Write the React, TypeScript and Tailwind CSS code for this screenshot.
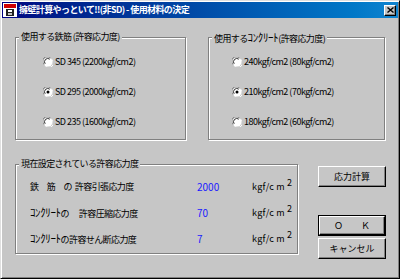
import React from 'react';

const FONT = "'Noto Sans CJK JP', 'Liberation Sans', sans-serif";

// half-width katakana renders small in Noto, so bump it a little
function Hk({ children }: { children: React.ReactNode }) {
  return <span className="text-[11px] tracking-[-0.4px]">{children}</span>;
}

function Radio({ checked }: { checked?: boolean }) {
  return (
    <svg width="10" height="10" viewBox="0 0 12 12" className="shrink-0">
      <circle cx="6" cy="6" r="5.5" fill="#ffffff" />
      <path d="M1.2 9 A5.5 5.5 0 0 1 9 1.2" fill="none" stroke="#808080" strokeWidth="1.2" />
      <path d="M2.6 8.2 A4 4 0 0 1 8.2 2.6" fill="none" stroke="#000000" strokeWidth="1" />
      <path d="M3 11 A5.5 5.5 0 0 0 11 3" fill="none" stroke="#ffffff" strokeWidth="1.2" />
      {checked && <circle cx="6" cy="6" r="1.8" fill="#000000" />}
    </svg>
  );
}

function GroupBox({
  label,
  className,
  children,
}: {
  label: React.ReactNode;
  className: string;
  children: React.ReactNode;
}) {
  return (
    <div
      className={`relative border border-[#808080] shadow-[inset_1px_1px_0_#ffffff,1px_1px_0_#ffffff] ${className}`}
    >
      {/* group caption sits over the top border */}
      <span className="absolute -top-[7px] left-[3px] whitespace-pre bg-[#c6c6c6] px-[2px] text-[9px] leading-[12px] tracking-[-0.6px] text-black">
        {label}
      </span>
      {children}
    </div>
  );
}

function RadioRow({ label, checked }: { label: string; checked?: boolean }) {
  return (
    <div className="flex h-[10px] items-center gap-[2px]">
      <Radio checked={checked} />
      <span className="text-[9px] leading-[10px] tracking-[-0.5px] text-black">{label}</span>
    </div>
  );
}

function WinButton({ children, primary }: { children: React.ReactNode; primary?: boolean }) {
  if (primary) {
    return (
      <div className="border border-black">
        <div className="flex h-[19px] items-center justify-center whitespace-pre border border-t-white border-l-white border-r-black border-b-black shadow-[inset_-1px_-1px_0_#808080] text-[9px] text-black">
          {children}
        </div>
      </div>
    );
  }
  return (
    <div className="flex h-[21px] items-center justify-center border border-t-white border-l-white border-r-black border-b-black shadow-[inset_-1px_-1px_0_#808080] text-[9px] text-black">
      {children}
    </div>
  );
}

function StressRow({ label, value }: { label: React.ReactNode; value: string }) {
  return (
    <div className="flex h-[10px] items-center text-[9px] leading-[10px]">
      <span className="w-[167px] whitespace-pre tracking-[-0.6px] text-black">{label}</span>
      <span className="w-[55px] text-[10px] text-[#1a1aff]">{value}</span>
      <span className="text-black tracking-[0.3px]">
        kgf/c m<sup className="ml-[2px] text-[9px]">2</sup>
      </span>
    </div>
  );
}

export default function App() {
  return (
    <div
      className="flex h-[279px] w-[400px] flex-col border border-t-[#dfdfdf] border-l-[#dfdfdf] border-r-black border-b-black bg-[#c6c6c6] p-[1px] shadow-[inset_1px_1px_0_#ffffff,inset_-1px_-1px_0_#808080]"
      style={{ fontFamily: FONT }}
    >
      {/* Title bar */}
      <div className="flex h-[16px] items-center bg-gradient-to-r from-[#000080] to-[#1084d0] pl-[1px] pr-[2px]">
        <svg width="14" height="14" viewBox="0 0 14 14" className="shrink-0">
          <rect x="0" y="0" width="14" height="14" fill="#ffffff" />
          <rect x="1" y="1" width="12" height="4" fill="#d00000" />
          <rect x="3" y="6" width="8" height="7" fill="#202020" />
          <rect x="5" y="7" width="4" height="2" fill="#ffffff" />
          <rect x="5" y="10" width="4" height="2" fill="#c0c0c0" />
        </svg>
        <span className="ml-[2px] text-[9px] font-bold leading-[14px] tracking-[-0.6px] text-white">
          擁壁計算やっといて!!(非SD) - 使用材料の決定
        </span>
        <div className="ml-auto flex h-[11px] w-[12px] items-center justify-center border border-t-white border-l-white border-r-black border-b-black bg-[#c6c6c6] shadow-[inset_-1px_-1px_0_#808080]">
          <svg width="7" height="6" viewBox="0 0 7 6">
            <path d="M0.5 0.5 L6.5 5.5 M6.5 0.5 L0.5 5.5" stroke="#000" strokeWidth="1.4" />
          </svg>
        </div>
      </div>

      {/* Material selection */}
      <div className="ml-[13px] mt-[19px] flex gap-[22px]">
        <GroupBox label="使用する鉄筋 (許容応力度)" className="h-[103px] w-[171px]">
          <div className="flex flex-col gap-[20px] pl-[27px] pt-[19px]">
            <RadioRow label="SD 345 (2200kgf/cm2)" />
            <RadioRow label="SD 295 (2000kgf/cm2)" checked />
            <RadioRow label="SD 235 (1600kgf/cm2)" />
          </div>
        </GroupBox>
        <GroupBox
          label={
            <>
              使用する<Hk>ｺﾝｸﾘｰﾄ</Hk>(許容応力度)
            </>
          }
          className="h-[103px] w-[177px]"
        >
          <div className="flex flex-col gap-[20px] pl-[23px] pt-[19px]">
            <RadioRow label="240kgf/cm2 (80kgf/cm2)" />
            <RadioRow label="210kgf/cm2 (70kgf/cm2)" checked />
            <RadioRow label="180kgf/cm2 (60kgf/cm2)" />
          </div>
        </GroupBox>
      </div>

      {/* Current allowable stress + buttons */}
      <div className="ml-[13px] mt-[24px] flex gap-[20px]">
        <GroupBox label="現在設定されている許容応力度" className="h-[90px] w-[283px]">
          <div className="flex flex-col gap-[16px] pl-[14px] pt-[17px]">
            <StressRow label="鉄　筋　の  許容引張応力度" value="2000" />
            <StressRow
              label={
                <>
                  <Hk>ｺﾝｸﾘｰﾄ</Hk>の　 許容圧縮応力度
                </>
              }
              value="70"
            />
            <StressRow
              label={
                <>
                  <Hk>ｺﾝｸﾘｰﾄ</Hk>の許容せん断応力度
                </>
              }
              value="7"
            />
          </div>
        </GroupBox>
        <div className="mt-[2px] flex w-[68px] flex-col">
          <WinButton>応力計算</WinButton>
          <div className="mt-[28px]">
            <WinButton primary>Ｏ　　Ｋ</WinButton>
          </div>
          <div className="mt-[2px]">
            <WinButton>キャンセル</WinButton>
          </div>
        </div>
      </div>
    </div>
  );
}
